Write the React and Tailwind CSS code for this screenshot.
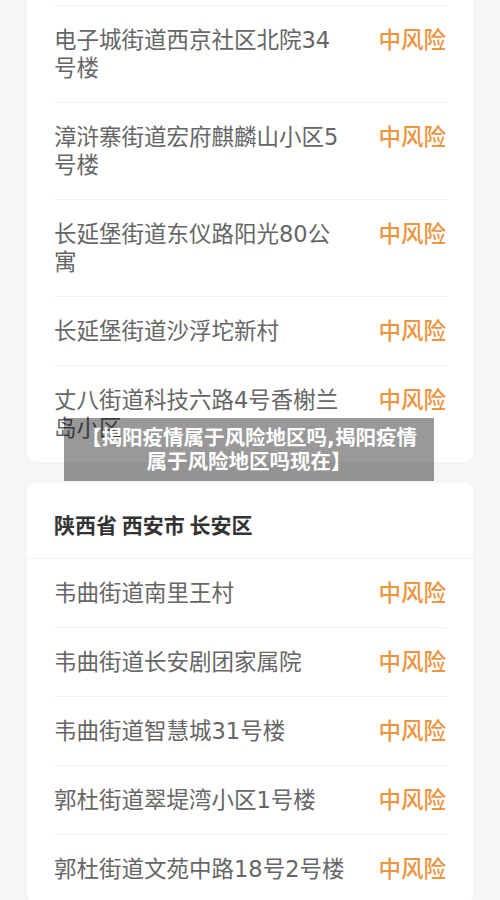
import React from 'react';

// 每个地址按原图断行
const groupOne = [
    ['电子城街道西京社区北院34', '号楼'],
    ['漳浒寨街道宏府麒麟山小区5', '号楼'],
    ['长延堡街道东仪路阳光80公', '寓'],
    ['长延堡街道沙浮坨新村'],
    ['丈八街道科技六路4号香榭兰', '岛小区'],
];

const groupTwo = [
    ['韦曲街道南里王村'],
    ['韦曲街道长安剧团家属院'],
    ['韦曲街道智慧城31号楼'],
    ['郭杜街道翠堤湾小区1号楼'],
    ['郭杜街道文苑中路18号2号楼'],
];

const RiskRow = ({ lines, first }) => (
    <div className={`${first ? '' : 'border-t border-[#f1f1f1]'} mx-[27px] py-[20px] flex justify-between items-start`}>
        <p className="text-[22.5px] leading-[28px] text-[#666666] whitespace-nowrap">
            {lines.map((line, i) => (
                <span key={i} className="block">{line}</span>
            ))}
        </p>
        <span className="text-[22.5px] leading-[28px] text-[#ec9440] font-medium">中风险</span>
    </div>
);

const App = () => {
    return (
        <div
            className="relative w-[500px] h-[900px] overflow-hidden bg-[#f6f6f6]"
            style={{ fontFamily: '"DejaVu Sans", "Noto Sans CJK SC", sans-serif' }}
        >
            {/* 第一个卡片（上半部分被截掉） */}
            <div className="mx-[27px] bg-white rounded-b-[8px] pt-[5px] shadow-[0_1px_3px_rgba(0,0,0,0.04)]">
                {groupOne.map((lines) => (
                    <RiskRow key={lines.join('')} lines={lines} />
                ))}
            </div>

            <div className="mx-[27px] mt-[21px] bg-white rounded-[8px] shadow-[0_1px_3px_rgba(0,0,0,0.04)]">
                <div className="px-[27px] pt-[27px] pb-[20px] border-b border-[#f3f3f3]">
                    <p
                        className="text-[21px] leading-[28px] font-bold text-[#333333] whitespace-nowrap"
                        style={{ fontFamily: '"Noto Sans CJK SC", sans-serif' }}
                    >
                        陕西省 西安市 长安区
                    </p>
                </div>
                {groupTwo.map((lines, i) => (
                    <RiskRow key={lines.join('')} lines={lines} first={i === 0} />
                ))}
            </div>

            {/* 标题浮层 */}
            <div className="absolute left-[64px] top-[418px] w-[370px] h-[63px] bg-black/40 flex items-center justify-center">
                <p className="text-white font-bold text-[20.5px] leading-[24px] text-center whitespace-nowrap">
                    <span className="block">【揭阳疫情属于风险地区吗,揭阳疫情</span>
                    <span className="block">属于风险地区吗现在】</span>
                </p>
            </div>
        </div>
    );
};

export default App;
